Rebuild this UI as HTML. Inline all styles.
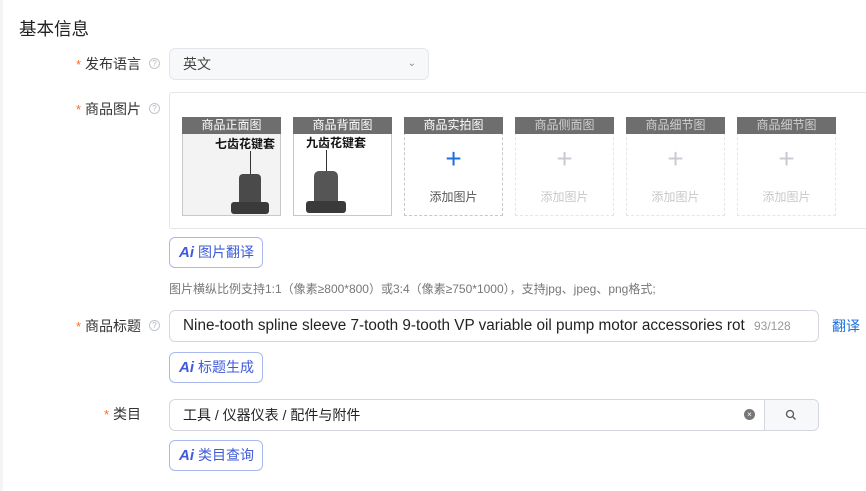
<!DOCTYPE html>
<html><head><meta charset="utf-8"><style>
*{box-sizing:border-box;margin:0;padding:0}
body{width:866px;height:491px;background:#fff;font-family:"Liberation Sans","Noto Sans CJK SC",sans-serif;position:relative;overflow:hidden;color:#333}
.a{position:absolute}
.lbl{position:absolute;right:725px;font-size:14px;color:#333;white-space:nowrap}
.lbl b{color:#f56c2d;font-weight:normal;margin-right:4px;font-size:13px}
.q{position:absolute;left:149px;width:11px;height:11px;border:1px solid #c0c4cc;border-radius:50%;font-size:8px;color:#b0b4bc;text-align:center;line-height:9px}
.tile{position:absolute;top:117px;width:99px;height:99px;border:1px dashed #c8c8c8}
.tile.img{border:1px solid #c8c8c8;background:#f3f3f3}
.tile .h{position:absolute;left:-1px;right:-1px;top:-1px;height:17px;background:#6e6e6e;color:#fff;font-size:12px;text-align:center;line-height:17px}
.tile.dis{border-color:#e6e6e6}
.tile.dis .h{color:#d0d0d0}
.tile .p{position:absolute;left:0;right:0;top:26px;text-align:center;font-size:28px;line-height:30px;color:#1a6fe0;font-weight:300}
.tile .t{position:absolute;left:0;right:0;top:70px;text-align:center;font-size:12px;color:#555}
.tile.dis .p{color:#c8ccd2}.tile.dis .t{color:#c8c8c8}
.ai{position:absolute;left:169px;width:94px;height:31px;border:1px solid #a9b8ee;border-radius:6px;color:#3f5bd8;font-size:14px;line-height:29px;padding-left:9px}
.ai i{font-style:italic;font-weight:bold;font-size:15px;margin-right:4px}
.inp{position:absolute;left:169px;width:650px;height:32px;border:1px solid #d4d7de;border-radius:6px;font-size:14px;line-height:30px;padding-left:13px;color:#222}
</style></head><body>
<div class="a" style="left:0;top:0;width:3px;height:491px;background:#f4f4f4"></div>
<div class="a" style="left:19px;top:16px;font-size:17.5px;color:#222">基本信息</div>

<div class="lbl" style="top:54px"><b>*</b>发布语言</div><div class="q" style="top:58px">?</div>
<div class="a" style="left:169px;top:48px;width:260px;height:32px;border:1px solid #e3e6eb;border-radius:6px;background:#f6f8fa;font-size:14px;line-height:30px;padding-left:13px;color:#444">英文<span style="position:absolute;right:12px;top:0;font-size:10px;color:#888">&#8964;</span></div>

<div class="lbl" style="top:99px"><b>*</b>商品图片</div><div class="q" style="top:103px">?</div>
<div class="a" style="left:169px;top:92px;width:720px;height:137px;border:1px solid #e6e6e6;border-radius:3px"></div>

<div class="tile img" style="left:182px"><div class="h">商品正面图</div>
<div class="a" style="left:32px;top:17px;font-size:12px;font-weight:bold;color:#111">七齿花键套</div>
<div class="a" style="left:67px;top:33px;width:1px;height:24px;background:#333"></div>
<div class="a" style="left:56px;top:56px;width:22px;height:34px;background:#4a4a4a;border-radius:4px"></div>
<div class="a" style="left:48px;top:84px;width:38px;height:12px;background:#3a3a3a;border-radius:3px"></div></div>
<div class="tile img" style="left:293px;background:#fff"><div class="h">商品背面图</div>
<div class="a" style="left:12px;top:16px;font-size:12px;font-weight:bold;color:#111">九齿花键套</div>
<div class="a" style="left:32px;top:32px;width:1px;height:24px;background:#333"></div>
<div class="a" style="left:20px;top:53px;width:24px;height:36px;background:#555;border-radius:5px"></div>
<div class="a" style="left:12px;top:83px;width:40px;height:12px;background:#3a3a3a;border-radius:3px"></div></div>
<div class="tile" style="left:404px"><div class="h">商品实拍图</div><div class="p">+</div><div class="t">添加图片</div></div>
<div class="tile dis" style="left:515px"><div class="h">商品侧面图</div><div class="p">+</div><div class="t">添加图片</div></div>
<div class="tile dis" style="left:626px"><div class="h">商品细节图</div><div class="p">+</div><div class="t">添加图片</div></div>
<div class="tile dis" style="left:737px"><div class="h">商品细节图</div><div class="p">+</div><div class="t">添加图片</div></div>

<div class="ai" style="top:237px"><i>Ai</i>图片翻译</div>
<div class="a" style="left:169px;top:280px;font-size:12px;color:#777;white-space:nowrap">图片横纵比例支持1:1（像素≥800*800）或3:4（像素≥750*1000），支持jpg、jpeg、png格式;</div>

<div class="lbl" style="top:316px"><b>*</b>商品标题</div><div class="q" style="top:320px">?</div>
<div class="inp" style="top:310px;font-size:15.3px;white-space:nowrap;overflow:hidden">Nine-tooth spline sleeve 7-tooth 9-tooth VP variable oil pump motor accessories rot<span style="position:absolute;right:0;top:0;width:70px;font-size:12px;color:#999;background:#fff;padding-left:6px;border-radius:0 6px 6px 0">93/128</span></div>
<div class="a" style="left:832px;top:316px;font-size:14px;color:#1a6fe0">翻译</div>
<div class="ai" style="top:352px"><i>Ai</i>标题生成</div>

<div class="lbl" style="top:404px"><b>*</b>类目</div>
<div class="inp" style="top:399px">工具 / 仪器仪表 / 配件与附件
<span style="position:absolute;left:574px;top:9px;width:11px;height:11px;border-radius:50%;background:#777;color:#fff;font-size:8px;line-height:11px;text-align:center">×</span>
<span style="position:absolute;right:0;top:0;width:54px;height:30px;border-left:1px solid #d4d7de;background:#f7f8fa;border-radius:0 6px 6px 0"><svg width="12" height="12" viewBox="0 0 12 12" style="position:absolute;left:20px;top:9px"><circle cx="5" cy="5" r="3.5" stroke="#555" stroke-width="1.3" fill="none"/><path d="M7.6 7.6L10.5 10.5" stroke="#555" stroke-width="1.3"/></svg></span></div>
<div class="ai" style="top:440px"><i>Ai</i>类目查询</div>
</body></html>
